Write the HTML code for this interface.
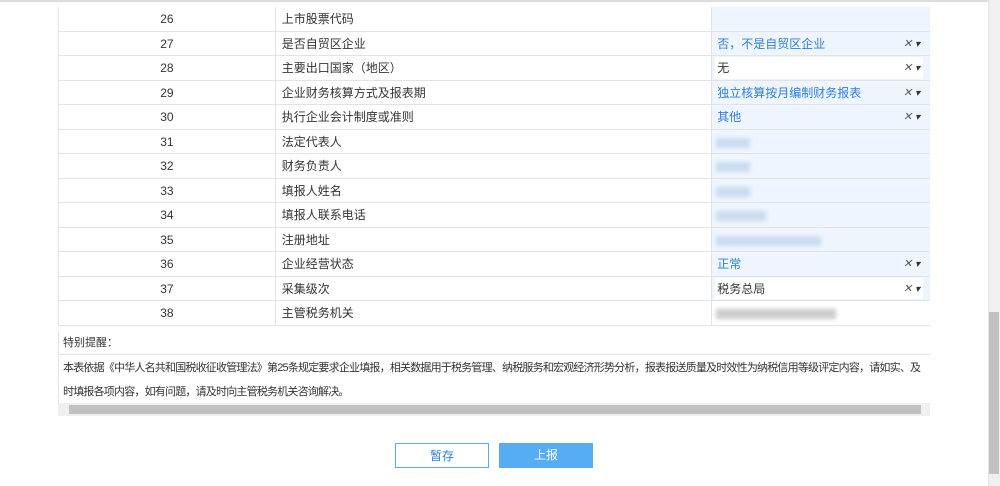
<!DOCTYPE html>
<html><head><meta charset="utf-8"><style>
*{margin:0;padding:0;box-sizing:border-box}
body{width:1000px;height:486px;background:#fff;position:relative;overflow:hidden;font-family:"Liberation Sans","Noto Sans CJK SC",sans-serif;font-size:12px;color:#333}
.top{position:absolute;left:0;top:0;width:988px;height:2px;background:#ddd}
.sb{position:absolute;right:0;top:0;width:12px;height:486px;background:#f0f0f0;border-left:1px solid #e6e6e6}
.thumb{position:absolute;right:1px;top:312px;width:10px;height:162px;background:#c1c1c1}
.tbl{position:absolute;left:58px;top:7px;width:872px;border-left:1px solid #e3e3e3}
.r{height:24.5px;display:flex;border-bottom:1px solid #e3e3e3}
.c1{width:217px;text-align:center;line-height:24px;border-right:1px solid #e3e3e3}
.c2{width:437px;padding-left:6px;line-height:24px;border-right:1px solid #e3e3e3}
.c3{width:218px;background:#eef5fe;position:relative;line-height:24px;padding-left:5px;color:#2f7fd8}
.c3.w{color:#333}
.c3.w .in{position:absolute;left:3px;top:1px;right:7px;bottom:1px;background:#fff}
.c3 span{position:relative}
.x{position:absolute;right:10px;top:0;color:#555;font-size:11px}
.x:after{content:" \25BE";font-size:10px;color:#333}
.blur{position:absolute;left:4px;top:8px;height:10px;background:#c9dcf0;filter:blur(2px)}
.note{position:absolute;left:58px;width:872px;border-left:1px solid #e3e3e3;padding-left:4px;font-size:11px}
.hs{position:absolute;left:58px;top:403px;width:872px;height:13px;background:#f0f0f0}
.hs div{position:absolute;left:11px;top:2px;width:852px;height:9px;background:#c1c1c1}
.btn{position:absolute;top:443px;height:25px;line-height:24px;text-align:center;font-size:12px}
</style></head><body>
<div class="top"></div>
<div class="tbl">
<div class="r"><div class="c1">26</div><div class="c2">上市股票代码</div><div class="c3"></div></div>
<div class="r"><div class="c1">27</div><div class="c2">是否自贸区企业</div><div class="c3">否，不是自贸区企业<i class="x">✕</i></div></div>
<div class="r"><div class="c1">28</div><div class="c2">主要出口国家（地区）</div><div class="c3 w"><div class="in"></div><span>无</span><i class="x">✕</i></div></div>
<div class="r"><div class="c1">29</div><div class="c2">企业财务核算方式及报表期</div><div class="c3">独立核算按月编制财务报表<i class="x">✕</i></div></div>
<div class="r"><div class="c1">30</div><div class="c2">执行企业会计制度或准则</div><div class="c3">其他<i class="x">✕</i></div></div>
<div class="r"><div class="c1">31</div><div class="c2">法定代表人</div><div class="c3"><div class="blur" style="width:34px"></div></div></div>
<div class="r"><div class="c1">32</div><div class="c2">财务负责人</div><div class="c3"><div class="blur" style="width:34px"></div></div></div>
<div class="r"><div class="c1">33</div><div class="c2">填报人姓名</div><div class="c3"><div class="blur" style="width:34px"></div></div></div>
<div class="r"><div class="c1">34</div><div class="c2">填报人联系电话</div><div class="c3"><div class="blur" style="width:50px"></div></div></div>
<div class="r"><div class="c1">35</div><div class="c2">注册地址</div><div class="c3"><div class="blur" style="width:105px"></div></div></div>
<div class="r"><div class="c1">36</div><div class="c2">企业经营状态</div><div class="c3">正常<i class="x">✕</i></div></div>
<div class="r"><div class="c1">37</div><div class="c2">采集级次</div><div class="c3 w"><div class="in"></div><span>税务总局</span><i class="x">✕</i></div></div>
<div class="r"><div class="c1">38</div><div class="c2">主管税务机关</div><div class="c3 w" style="background:#fff"><div class="blur" style="width:120px;background:#ccc"></div></div></div>
</div>
<div class="note" style="top:331px;height:24px;line-height:24px;border-bottom:1px solid #e3e3e3">特别提醒：</div>
<div class="note" style="top:356px;height:48px;line-height:24px;letter-spacing:-0.8px;padding-right:0">本表依据《中华人名共和国税收征收管理法》第25条规定要求企业填报，相关数据用于税务管理、纳税服务和宏观经济形势分析，报表报送质量及时效性为纳税信用等级评定内容，请如实、及<br>时填报各项内容，如有问题，请及时向主管税务机关咨询解决。</div>
<div class="hs"><div></div></div>
<div class="btn" style="left:395px;width:94px;border:1px solid #5aa9ee;color:#2f7fd8;background:#fff">暂存</div>
<div class="btn" style="left:499px;width:94px;background:#57adf2;color:#fff">上报</div>
<div class="sb"><div class="thumb"></div></div>
</body></html>
